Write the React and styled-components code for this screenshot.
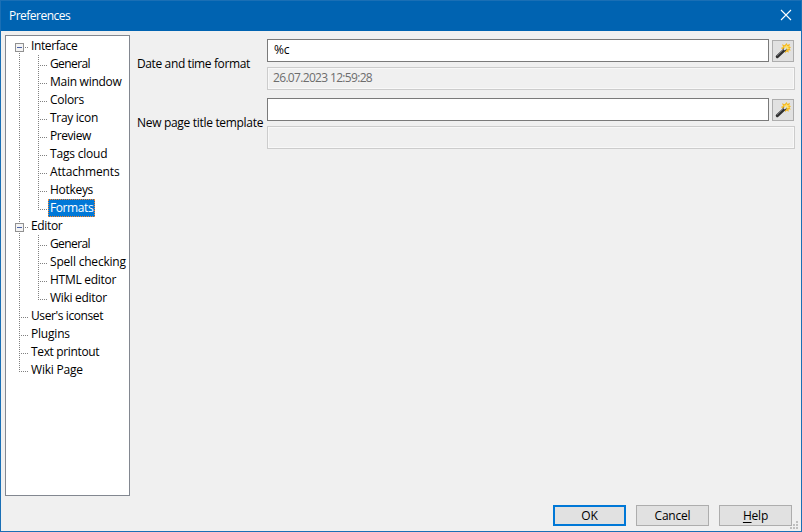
import React from "react";
import styled, { createGlobalStyle } from "styled-components";

const GlobalStyle = createGlobalStyle`
  * { box-sizing: border-box; }
  body { margin: 0; }
`;

const Dialog = styled.div`
  width: 802px;
  height: 532px;
  display: flex;
  flex-direction: column;
  border: 1px solid #1a6fb5;
  background: #f0f0f0;
  color: #000;
  font: 12px/18px "Open Sans", "Noto Sans", sans-serif;
`;

const TitleBar = styled.header`
  height: 30px;
  flex: none;
  display: flex;
  align-items: center;
  justify-content: space-between;
  padding: 0 9px 0 8px;
  background: #0063b1;
  color: #fff;
`;

const CloseIcon = styled.svg`
  margin-bottom: 2px;
`;

const Text = styled.span`
  white-space: pre;
  letter-spacing: ${(p) => p.$track ?? -0.2}px;
`;

const Content = styled.div`
  flex: 1;
  display: flex;
  align-items: flex-start;
  padding: 4px 6px 0 4px;
`;

const Tree = styled.nav`
  width: 125px;
  height: 461px;
  flex: none;
  padding-top: 1px;
  border: 1px solid #828790;
  background: #fff;
  overflow: hidden;
`;

const TreeRow = styled.div`
  height: 18px;
  display: flex;
`;

const Guides = styled.svg`
  flex: none;
  display: block;
`;

const TreeLabel = styled.span`
  height: 18px;
  width: ${(p) => (p.$selected ? "47px" : "auto")};
  padding: 0 1px;
  border: 1px ${(p) => (p.$selected ? "dotted #ff8728" : "solid transparent")};
  background: ${(p) => (p.$selected ? "#0078d7" : "transparent")};
  color: ${(p) => (p.$selected ? "#fff" : "#000")};
  line-height: 15px;
`;

const Form = styled.main`
  flex: 1;
  display: grid;
  grid-template-columns: 130px 1fr;
  row-gap: 8px;
  padding: 4px 0 0 7px;
`;

const FieldLabel = styled.label`
  align-self: center;
  padding-bottom: 2px;
`;

const Field = styled.div`
  display: flex;
  flex-direction: column;
  gap: 5px;
`;

const InputRow = styled.div`
  display: flex;
  align-items: flex-end;
  gap: 3px;
`;

const Input = styled.div`
  flex: 1;
  height: 23px;
  padding-left: 6px;
  border: 1px solid #7a7a7a;
  background: #fff;
  line-height: 20px;
`;

const Preview = styled.div`
  height: 23px;
  width: 528px;
  padding-left: 5px;
  border: 1px solid #ccc;
  box-shadow: inset 0 0 0 1px #f8f8f8;
  color: #6d6d6d;
  line-height: 19px;
`;

const WandButton = styled.button`
  width: 22px;
  height: 22px;
  margin-right: 1px;
  padding: 0;
  display: grid;
  place-items: center;
  border: 1px solid #adadad;
  background: #e1e1e1;
`;

const Footer = styled.footer`
  height: 26px;
  flex: none;
  display: flex;
  justify-content: flex-end;
  gap: 10px;
  padding: 0 9px 0 0;
  position: relative;
`;

const Button = styled.button`
  width: 73px;
  height: 21px;
  padding: 0;
  display: flex;
  align-items: center;
  justify-content: center;
  border: ${(p) => (p.$primary ? "2px solid #0078d7" : "1px solid #adadad")};
  background: #e1e1e1;
  color: #000;
  font: inherit;
`;

const Grip = styled.svg`
  position: absolute;
  right: 3px;
  bottom: 2px;
`;

const Mnemonic = styled.u`
  text-underline-offset: 2px;
`;

const items = [
  { text: "Interface", root: true, first: true, expand: true, track: -0.4 },
  { text: "General", track: -0.6 },
  { text: "Main window", track: -0.27 },
  { text: "Colors", track: -0.3 },
  { text: "Tray icon", track: -0.3 },
  { text: "Preview", track: -0.45 },
  { text: "Tags cloud" },
  { text: "Attachments", track: -0.15 },
  { text: "Hotkeys", track: -0.3 },
  { text: "Formats", last: true, selected: true, track: -0.4 },
  { text: "Editor", root: true, expand: true, track: -0.35 },
  { text: "General", track: -0.6 },
  { text: "Spell checking" },
  { text: "HTML editor", track: -0.28 },
  { text: "Wiki editor", last: true, track: -0.3 },
  { text: "User's iconset", root: true, track: -0.4 },
  { text: "Plugins", root: true },
  { text: "Text printout", root: true, track: -0.35 },
  { text: "Wiki Page", root: true, last: true },
];

function Branch({ item }) {
  const { root, first, last, expand } = item;
  return (
    <Guides width={root ? 23 : 42} height="18" shapeRendering="crispEdges">
      <g stroke="#808080" strokeDasharray="1 1" fill="none">
        {(root || item.group !== "end") && (
          <path d={`M13.5 ${first ? 10 : 0}V${root && last ? 11 : 18}`} />
        )}
        {root ? <path d="M13 10.5H22" /> : <path d={`M32.5 0V${last ? 11 : 18}M32 10.5H41`} />}
      </g>
      {expand && (
        <>
          <rect x="8" y="5" width="11" height="11" fill="#fff" />
          <rect x="9.5" y="6.5" width="8" height="8" fill="#f4f4f4" stroke="#919191" />
          <path d="M11 10.5H16" stroke="#4b63a7" />
        </>
      )}
    </Guides>
  );
}

function Wand() {
  return (
    <svg width="16" height="16" viewBox="0 0 16 16">
      <path
        d="M11.7 0l.8 2L15 .8l-.8 2.6 1.8.8-1.5 1.3 1.3 2-2.3-.2.1 2.4-1.8-1.2-1.5 1.6-.8-2.2-2.8.6 1.3-2L5.8 5l2.3-1L7 1.3l2.6.9z"
        fill="#f5b91f"
      />
      <path d="M11.4 1.8l.9 1.5 1.7-.4-.8 1.5.9 1.5-1.7.1-.8 1.5-1.3-1.3-1.8.1.8-1.5-.9-1.3 1.9-.1z" fill="#ffe36b" />
      <path d="M2.3 13.7L10 6.4" stroke="#303030" strokeWidth="3.1" strokeLinecap="round" />
      <path d="M2 12.8l6.6-6.3" stroke="#777b80" strokeWidth=".9" />
      <path d="M9.7 6.2l.8-.8" stroke="#dfe2e6" strokeWidth="2" strokeLinecap="round" />
    </svg>
  );
}

function FormatField({ label, value, preview, track }) {
  return (
    <>
      <FieldLabel><Text $track={track}>{label}</Text></FieldLabel>
      <Field>
        <InputRow>
          <Input><Text>{value}</Text></Input>
          <WandButton aria-label="Insert"><Wand /></WandButton>
        </InputRow>
        <Preview><Text $track={-0.67}>{preview}</Text></Preview>
      </Field>
    </>
  );
}

export default function App() {
  return (
    <>
      <GlobalStyle />
      <Dialog>
        <TitleBar>
          <Text $track={-0.52}>Preferences</Text>
          <CloseIcon width="12" height="12" viewBox="0 0 12 12">
            <path d="M1 1l10 10M11 1L1 11" stroke="#fff" strokeWidth="1.1" />
          </CloseIcon>
        </TitleBar>
        <Content>
          <Tree>
            {items.map((item, i) => (
              <TreeRow key={i}>
                <Branch item={item} />
                <TreeLabel $selected={item.selected}><Text $track={item.track}>{item.text}</Text></TreeLabel>
              </TreeRow>
            ))}
          </Tree>
          <Form>
            <FormatField label="Date and time format" value="%c" preview="26.07.2023 12:59:28" track={-0.38} />
            <FormatField label="New page title template" value="" preview="" track={-0.31} />
          </Form>
        </Content>
        <Footer>
          <Button $primary><Text>OK</Text></Button>
          <Button><Text>Cancel</Text></Button>
          <Button><Text><Mnemonic>H</Mnemonic>elp</Text></Button>
          <Grip width="8" height="8" fill="#bfbfbf" shapeRendering="crispEdges">
            <path d="M6 0h2v2h-2zM3 3h2v2h-2zM6 3h2v2h-2zM0 6h2v2h-2zM3 6h2v2h-2zM6 6h2v2h-2z" />
          </Grip>
        </Footer>
      </Dialog>
    </>
  );
}
